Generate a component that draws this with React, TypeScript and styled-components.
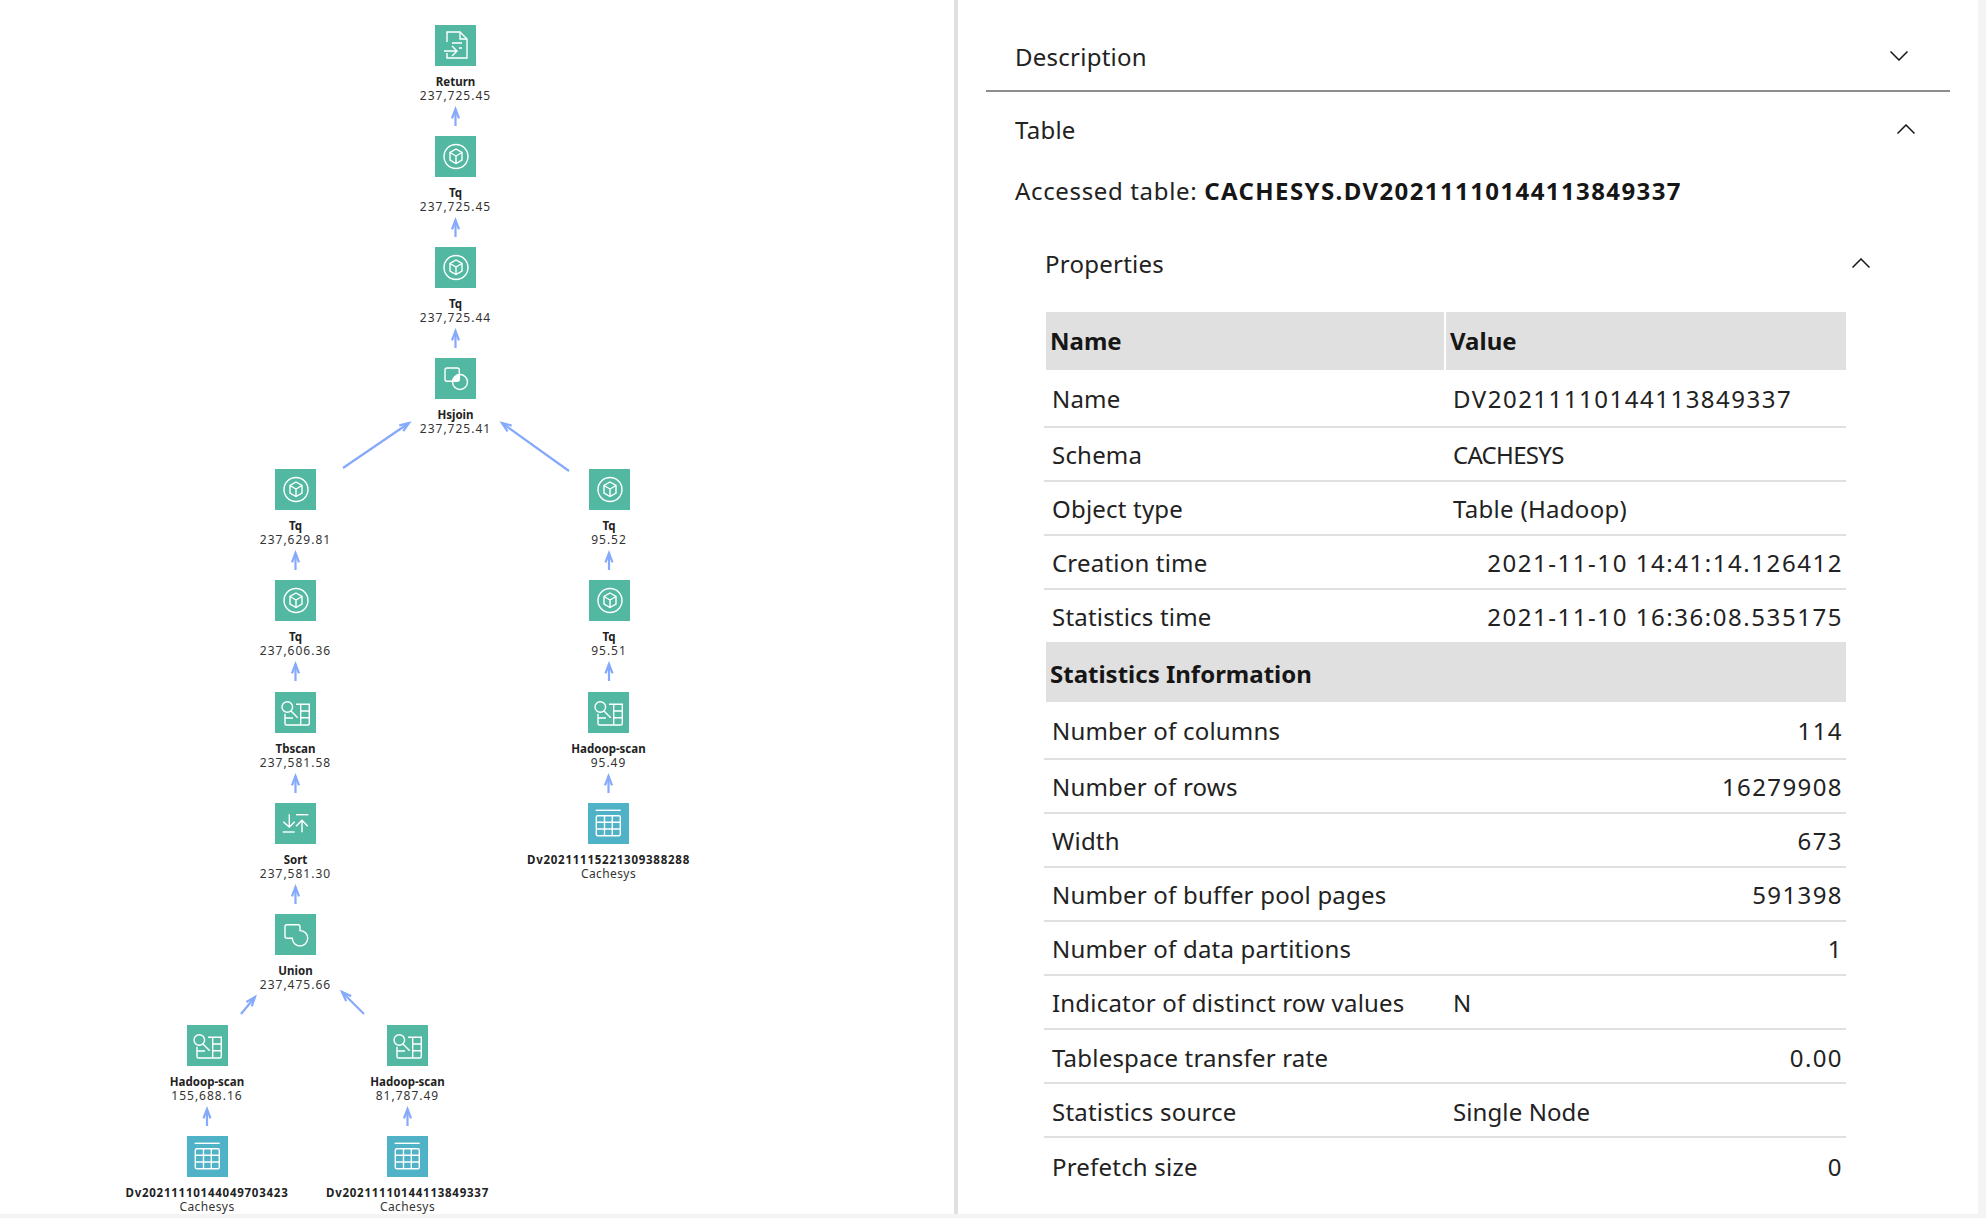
import React from "react";
import styled, { createGlobalStyle } from "styled-components";

const Global = createGlobalStyle`
  html, body { margin: 0; padding: 0; background: #f4f4f4; }
  body { font-family: "Noto Sans", "Open Sans", sans-serif; color: #161616; }
`;
const FONT = `"Noto Sans", "Open Sans", sans-serif`;

const Page = styled.div`
  display: flex; width: 1978px; height: 1214px; background: #fff; overflow: hidden;
`;
const GraphPane = styled.div`
  position: relative; width: 954px; height: 100%; flex: none; background: #fff;
`;
const Divider = styled.div`
  width: 4px; flex: none; background: #e0e0e0;
`;
const DetailPane = styled.div`
  flex: 1; padding: 0 28px 0 28px; font-family: ${FONT};
`;
const ArrowLayer = styled.svg`
  position: absolute; left: 0; top: 0; width: 954px; height: 1214px; pointer-events: none;
`;
const NodeWrap = styled.div`
  position: absolute; width: 200px; display: flex; flex-direction: column; align-items: center;
  transform: translateX(-50%);
`;
const NodeIcon = styled.div<{ $kind: "op" | "table" }>`
  width: 41px; height: 41px; background: ${(p) => (p.$kind === "table" ? "#4fb2c7" : "#53b8a2")};
  display: flex; align-items: center; justify-content: center;
`;
const NodeName = styled.div<{ $digits: boolean }>`
  margin-top: 9px; font: 700 11.5px/14px ${FONT}; color: #222; white-space: nowrap;
  letter-spacing: ${(p) => (p.$digits ? "0.75px" : "0")};
`;
const NodeValue = styled.div<{ $num: boolean }>`
  font: 400 12px/14px ${FONT}; color: #333; white-space: nowrap;
  letter-spacing: ${(p) => (p.$num ? "1px" : "0.4px")};
`;
const SectionHead = styled.div<{ $h: number; $pt?: number; $border?: boolean; $pr: number }>`
  display: flex; align-items: center; justify-content: space-between;
  height: ${(p) => p.$h}px; padding: ${(p) => p.$pt ?? 0}px ${(p) => p.$pr}px 0 29px;
  font-size: 24px; color: #222; letter-spacing: 0.25px;
  border-bottom: ${(p) => (p.$border ? "2px solid #8d8d8d" : "none")};
`;
const Accessed = styled.div`
  padding-left: 29px; height: 50px; line-height: 50px; font-size: 24px; color: #222; white-space: nowrap;
  letter-spacing: 0.65px;
  b { font-weight: 700; color: #161616; letter-spacing: 1.4px; }
`;
const SubSection = styled.div`
  padding-left: 59px; margin-top: 12px;
`;
const SubHead = styled.div`
  display: flex; align-items: center; justify-content: space-between;
  height: 70px; padding-right: 80px; font-size: 24px; color: #222; letter-spacing: 0.25px;
`;
const Grid = styled.table`
  border-collapse: separate; border-spacing: 0; table-layout: fixed; width: 802px;
  margin-left: -1px; margin-top: 14px; font-size: 24px; color: #222;
`;
const HeadCell = styled.th`
  box-sizing: border-box; background: #e0e0e0; background-clip: padding-box; text-align: left; font-weight: 700;
  height: 58px; padding: 0 4px 2px; color: #161616; border-left: 2px solid #fff;
`;
const SpanHead = styled.td`
  box-sizing: border-box; background: #e0e0e0; background-clip: padding-box; font-weight: 700;
  height: 60px; padding: 2px 4px 0; color: #161616; border-left: 2px solid #fff;
`;
const Cell = styled.td<{ $h: number; $line: boolean; $drop: number }>`
  box-sizing: border-box; height: ${(p) => p.$h}px; white-space: nowrap; padding: ${(p) => p.$drop}px 0 0 8px;
  letter-spacing: 0.2px;
  border-bottom: ${(p) => (p.$line ? "2px solid #e0e0e0" : "none")};
`;
const ValueCell = styled(Cell)<{ $right?: boolean; $ls: number }>`
  text-align: ${(p) => (p.$right ? "right" : "left")}; padding-right: 3px; padding-left: 9px;
  letter-spacing: ${(p) => p.$ls}px;
`;

const S = { stroke: "#fff", fill: "none", strokeWidth: 1.4 } as const;

const IconBase = ({ children }: { children: React.ReactNode }) => (
  <svg width="41" height="41" viewBox="0 0 41 41" {...S}>{children}</svg>
);
const IconReturn = () => (
  <IconBase>
    <path d="M12 17V7h13l7 7v19H12v-5" />
    <path d="M25 7v7h7" />
    <path d="M17 18h10M24 23h3" />
    <path d="M9 26h13M17 21l5 5-5 5" />
  </IconBase>
);
const IconCube = () => (
  <IconBase>
    <circle cx="21" cy="20.500" r="12" />
    <path d="M21 13l6 3.500v7.500l-6 3.500-6-3.500v-7.500z" />
    <path d="M15 16.500l6 3.500 6-3.500M21 20v7.500" />
  </IconBase>
);
const IconJoin = () => (
  <IconBase>
    <rect x="10" y="10" width="14.300" height="13.300" rx="2" />
    <circle cx="25" cy="24" r="7.500" />
    <path d="M24.300 16.600A7.500 7.500 0 0 0 17.600 23.300h4.700a2 2 0 0 0 2-2z" fill="#fff" stroke="none" />
  </IconBase>
);
const IconScan = () => (
  <IconBase>
    <circle cx="12.300" cy="15" r="5.300" />
    <path d="M16 19l6.700 6.700" />
    <path d="M21 12.300h13.300V31.500a1.500 1.500 0 0 1-1.500 1.500H11.500A1.500 1.500 0 0 1 10 31.500v-9.800" />
    <path d="M25.700 12.300V33M25.700 19h8.600M25.700 25.700h8.600M10 26h8" />
  </IconBase>
);
const IconSort = () => (
  <IconBase>
    <path d="M14.300 11.300V24M8.300 18.700l6 5.300 5.400-5.300" />
    <path d="M7.700 29h12" />
    <path d="M27 29.300V17.300M21 23.300l6-6 5.700 6" />
    <path d="M21 11.700h12.300" />
  </IconBase>
);
const IconUnion = () => (
  <IconBase>
    <path d="M10 12.700a2 2 0 0 1 2-2h11a2 2 0 0 1 2 2v3.900a7.700 7.700 0 1 1-7.700 7.700H12a2 2 0 0 1-2-2z" />
  </IconBase>
);
const IconTable = () => (
  <IconBase>
    <path d="M7.700 7.300h25" />
    <rect x="8.300" y="12.700" width="24" height="20" rx="1.500" />
    <path d="M8.300 19.300h24M8.300 26h24M16.500 12.700v20M24.300 12.700v20" />
  </IconBase>
);

type Kind = "return" | "cube" | "join" | "scan" | "sort" | "union" | "table";
const icons: Record<Kind, React.FC> = {
  return: IconReturn, cube: IconCube, join: IconJoin, scan: IconScan, sort: IconSort, union: IconUnion, table: IconTable,
};

const nodes: { x: number; y: number; k: Kind; n: string; v: string }[] = [
  { x: 455.5, y: 25, k: "return", n: "Return", v: "237,725.45" },
  { x: 455.5, y: 136, k: "cube", n: "Tq", v: "237,725.45" },
  { x: 455.5, y: 247, k: "cube", n: "Tq", v: "237,725.44" },
  { x: 455.5, y: 358, k: "join", n: "Hsjoin", v: "237,725.41" },
  { x: 295.5, y: 469, k: "cube", n: "Tq", v: "237,629.81" },
  { x: 295.5, y: 580, k: "cube", n: "Tq", v: "237,606.36" },
  { x: 295.5, y: 692, k: "scan", n: "Tbscan", v: "237,581.58" },
  { x: 295.5, y: 803, k: "sort", n: "Sort", v: "237,581.30" },
  { x: 295.5, y: 914, k: "union", n: "Union", v: "237,475.66" },
  { x: 207, y: 1025, k: "scan", n: "Hadoop-scan", v: "155,688.16" },
  { x: 407.5, y: 1025, k: "scan", n: "Hadoop-scan", v: "81,787.49" },
  { x: 207, y: 1136, k: "table", n: "Dv20211110144049703423", v: "Cachesys" },
  { x: 407.5, y: 1136, k: "table", n: "Dv20211110144113849337", v: "Cachesys" },
  { x: 609, y: 469, k: "cube", n: "Tq", v: "95.52" },
  { x: 609, y: 580, k: "cube", n: "Tq", v: "95.51" },
  { x: 608.5, y: 692, k: "scan", n: "Hadoop-scan", v: "95.49" },
  { x: 608.5, y: 803, k: "table", n: "Dv20211115221309388288", v: "Cachesys" },
];

const vArrow = (x: number, y: number) => [x, y + 17, x, y] as const;
const arrows: (readonly [number, number, number, number])[] = [
  vArrow(455.5, 109), vArrow(455.5, 220), vArrow(455.5, 331),
  [343, 468, 409, 423], [569, 471, 502, 423],
  vArrow(295.5, 553), vArrow(295.5, 664), vArrow(295.5, 776), vArrow(295.5, 887),
  vArrow(609, 553), vArrow(609, 664), vArrow(608.5, 776),
  [241, 1014, 255, 997], [364, 1014, 342, 992],
  vArrow(207, 1109), vArrow(407.5, 1109),
];

const Arrow = ({ a }: { a: readonly [number, number, number, number] }) => {
  const [x1, y1, x2, y2] = a;
  const ang = Math.atan2(y2 - y1, x2 - x1);
  const h = 10;
  const p = (d: number) => `${x2 + h * Math.cos(ang + d)} ${y2 + h * Math.sin(ang + d)}`;
  return (
    <g stroke="#85a9fb" strokeWidth="2.2" fill="none">
      <path d={`M${x1} ${y1}L${x2} ${y2}`} />
      <path d={`M${p(Math.PI - 0.36)}L${x2} ${y2}L${p(Math.PI + 0.36)}`} />
    </g>
  );
};

const Chevron = ({ up }: { up?: boolean }) => (
  <svg width="18" height="10" viewBox="0 0 18 10" fill="none" stroke="#161616" strokeWidth="1.500">
    <path d={up ? "M.5 9.500L9 1l8.500 8.500" : "M.5.500L9 9l8.500-8.500"} />
  </svg>
);

type R = { label: string; value: string; right?: boolean; ls: number; drop?: number };
const top: R[] = [
  { label: "Name", value: "DV20211110144113849337", ls: 1.5 },
  { label: "Schema", value: "CACHESYS", ls: -0.7 },
  { label: "Object type", value: "Table (Hadoop)", ls: 0.3 },
  { label: "Creation time", value: "2021-11-10 14:41:14.126412", right: true, ls: 1.55 },
  { label: "Statistics time", value: "2021-11-10 16:36:08.535175", right: true, ls: 1.55 },
];
const stats: R[] = [
  { label: "Number of columns", value: "114", right: true, ls: 1.4 },
  { label: "Number of rows", value: "16279908", right: true, ls: 1.4 },
  { label: "Width", value: "673", right: true, ls: 1.4 },
  { label: "Number of buffer pool pages", value: "591398", right: true, ls: 1.4 },
  { label: "Number of data partitions", value: "1", right: true, ls: 1.4 },
  { label: "Indicator of distinct row values", value: "N", ls: 0 },
  { label: "Tablespace transfer rate", value: "0.00", right: true, ls: 1.4, drop: 3 },
  { label: "Statistics source", value: "Single Node", ls: 0.1, drop: 3 },
  { label: "Prefetch size", value: "0", right: true, ls: 1.4, drop: 2 },
];

const Rows = ({ rows, lastHeight }: { rows: R[]; lastHeight: number }) => (
  <>
    {rows.map((r, i) => {
      const last = i === rows.length - 1;
      const h = i === 0 ? 58 : last ? lastHeight : 54;
      const drop = r.drop ?? 0;
      return (
        <tr key={r.label}>
          <Cell $h={h} $line={!last} $drop={drop}>{r.label}</Cell>
          <ValueCell $h={h} $line={!last} $drop={drop} $right={r.right} $ls={r.ls}>{r.value}</ValueCell>
        </tr>
      );
    })}
  </>
);

export default function App() {
  return (
    <>
      <Global />
      <Page>
        <GraphPane>
          <ArrowLayer viewBox="0 0 954 1214">
            {arrows.map((a, i) => <Arrow key={i} a={a} />)}
          </ArrowLayer>
          {nodes.map((n, i) => {
            const I = icons[n.k];
            const isTable = n.k === "table";
            return (
              <NodeWrap key={i} style={{ left: n.x, top: n.y }}>
                <NodeIcon $kind={isTable ? "table" : "op"}><I /></NodeIcon>
                <NodeName $digits={isTable}>{n.n}</NodeName>
                <NodeValue $num={!isTable}>{n.v}</NodeValue>
              </NodeWrap>
            );
          })}
        </GraphPane>
        <Divider />
        <DetailPane>
          <SectionHead $h={68} $pt={22} $border $pr={42}>Description<Chevron /></SectionHead>
          <SectionHead $h={74} $pr={35}>Table<Chevron up /></SectionHead>
          <Accessed>Accessed table: <b>CACHESYS.DV20211110144113849337</b></Accessed>
          <SubSection>
            <SubHead>Properties<Chevron up /></SubHead>
            <Grid>
              <colgroup><col style={{ width: 400 }} /><col /></colgroup>
              <thead><tr><HeadCell>Name</HeadCell><HeadCell>Value</HeadCell></tr></thead>
              <tbody>
                <Rows rows={top} lastHeight={52} />
                <tr><SpanHead colSpan={2}>Statistics Information</SpanHead></tr>
                <Rows rows={stats} lastHeight={54} />
              </tbody>
            </Grid>
          </SubSection>
        </DetailPane>
      </Page>
    </>
  );
}
